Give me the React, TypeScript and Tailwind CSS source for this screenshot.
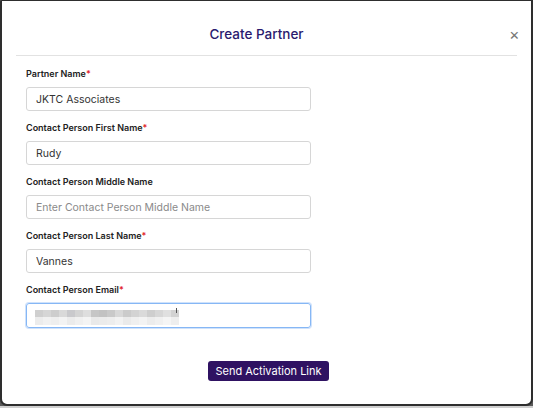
import React from 'react';

const font = { fontFamily: 'Inter, "Noto Sans", sans-serif' };

interface FieldProps {
  label: string;
  required?: boolean;
  value?: string;
  placeholder?: string;
}

const Field = ({ label, required, value, placeholder }: FieldProps) => (
  <div className="flex shrink-0 flex-col">
    <label className="h-[12px] text-[9px] font-semibold leading-[12px] text-[#222]">
      {label}
      {required && <span className="text-[#e11d2a]">*</span>}
    </label>
    <input
      readOnly
      value={value ?? ''}
      placeholder={placeholder}
      className="mt-[7px] h-[24px] w-[285px] rounded-[3px] border border-[#d6d6d6] px-[9px] text-[10.5px] text-[#333] outline-none placeholder:text-[#8a8a8a]"
      style={font}
    />
  </div>
);

// pixelated (blurred) email value
const topRow = ['#cfcfcf', '#d6d6d6', '#cdcdcd', '#d9d9d9', '#c9c9cc', '#d4d4d4', '#dedede', '#c6c6c6', '#c2c2c2', '#c9c9c9', '#d8d8d8', '#cbcbcb', '#d3d3d3', '#dadada', '#cecece', '#d7d7d7', '#e0e0e0', '#d2d2d2'];
const bottomRow = ['#ececec', '#f1f1f1', '#eeeeee', '#f3f3f3', '#ebebeb', '#f0f0f0', '#f4f4f4', '#e9e9e9', '#ebebeb', '#ededed', '#f2f2f2', '#eaeaea', '#efefef', '#f3f3f3', '#ececec', '#f0f0f0', '#f5f5f5', '#eeeeee'];

const BlurredEmail = () => (
  <div className="flex shrink-0 flex-col">
    <label className="h-[12px] text-[9px] font-semibold leading-[12px] text-[#222]">
      Contact Person Email<span className="text-[#e11d2a]">*</span>
    </label>
    <div className="relative mt-[7px] h-[25px] w-[285px] rounded-[3px] border border-[#86b7f5] shadow-[0_0_0_1px_#cfe2fb]">
      <div className="absolute left-[8px] top-[6px] flex flex-col">
        <div className="flex">
          {topRow.map((c, i) => (
            <div key={i} className="h-[7px] w-[8px]" style={{ background: c }} />
          ))}
        </div>
        <div className="flex">
          {bottomRow.map((c, i) => (
            <div key={i} className="h-[8px] w-[8px]" style={{ background: c }} />
          ))}
        </div>
      </div>
      <div className="absolute left-[149px] top-[4px] h-[5px] w-px bg-[#555]" />
    </div>
  </div>
);

export default function App() {
  return (
    <div className="h-[408px] w-[533px] bg-[#cfcfcf]" style={font}>
      <div className="h-[406px] bg-[#5a5a5a]">
        <div className="relative flex h-full flex-col overflow-hidden rounded-[7px] rounded-tl-[2px] rounded-tr-none border-b-2 border-l-2 border-r-2 border-t border-[#2e2e2e] bg-white">
          {/* Header */}
          <div className="mx-[14px] flex h-[55px] shrink-0 items-start border-b border-[#e2e2e2] pt-[23px]">
            <h1 className="flex-1 pr-[20px] text-center text-[13.5px] font-medium leading-[20px] text-[#291a6e]">
              Create Partner
            </h1>
          </div>
          <button className="absolute left-[507px] top-[25px] text-[16px] leading-none text-[#777]">×</button>

          {/* Form */}
          <div className="flex shrink-0 flex-col gap-[11px] pl-[24px] pt-[12px]">
            <Field label="Partner Name" required value="JKTC Associates" />
            <Field label="Contact Person First Name" required value="Rudy" />
            <Field label="Contact Person Middle Name" placeholder="Enter Contact Person Middle Name" />
            <Field label="Contact Person Last Name" required value="Vannes" />
            <BlurredEmail />
          </div>

          {/* Footer */}
          <div className="flex shrink-0 justify-center pl-[4px] pt-[33px]">
            <button className="h-[20px] rounded-[3px] bg-[#2f1262] px-[7px] text-[11px] leading-[20px] text-white">
              Send Activation Link
            </button>
          </div>
        </div>
      </div>
    </div>
  );
}
